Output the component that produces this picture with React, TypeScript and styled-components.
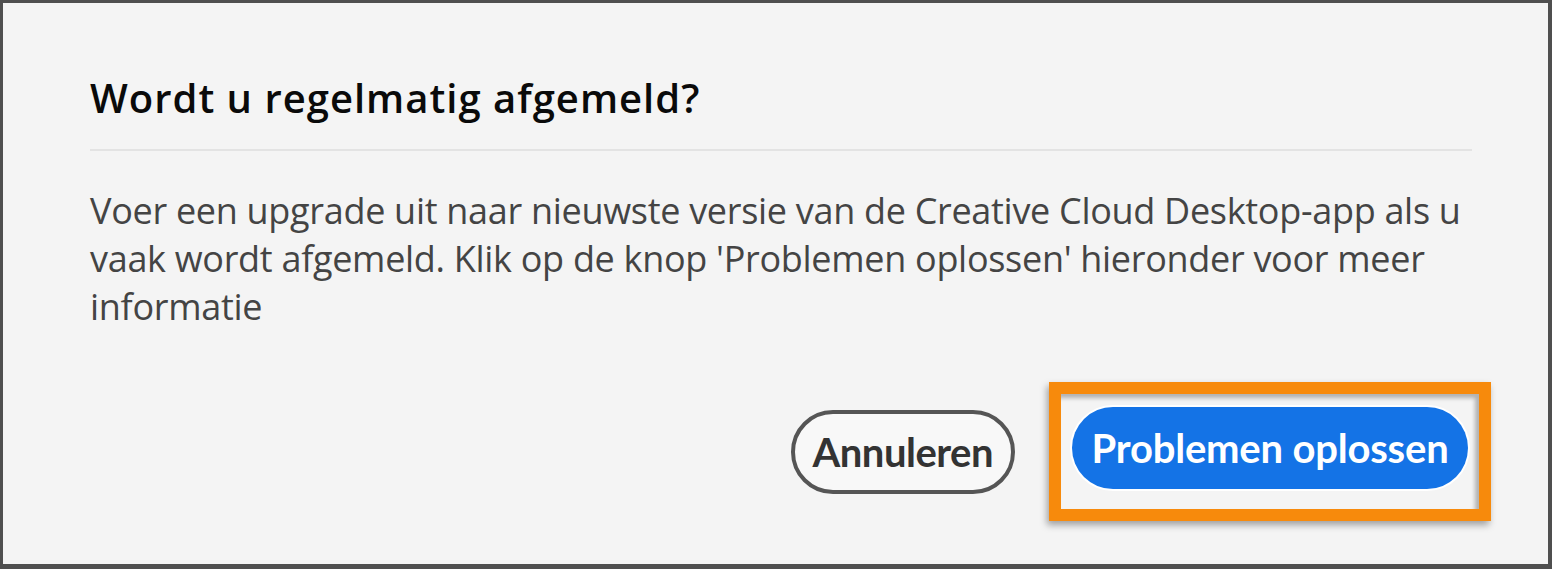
import React from "react";
import styled, { createGlobalStyle } from "styled-components";

const GlobalStyle = createGlobalStyle`
  html, body {
    margin: 0;
    padding: 0;
    background: #f4f4f4;
  }
`;

const Frame = styled.div`
  box-sizing: border-box;
  width: 1552px;
  height: 569px;
  background: #f4f4f4;
  border-style: solid;
  border-color: #4f4f4f;
  border-width: 3px 4px 5px 3px;
  display: flex;
  flex-direction: column;
  font-family: "Open Sans", "Noto Sans", sans-serif;
`;

const Content = styled.div`
  padding: 71px 76px 0 87px;
`;

const Title = styled.h2`
  margin: 0;
  font-size: 40px;
  line-height: 48px;
  font-weight: 600;
  letter-spacing: 1px;
  color: #0a0a0a;
`;

const Divider = styled.hr`
  margin: 27px 0 0;
  border: none;
  height: 2px;
  background: #e3e3e3;
`;

const Body = styled.p`
  margin: 36px 0 0;
  font-size: 36px;
  line-height: 48px;
  color: #444;
  letter-spacing: -0.3px;
`;

const Footer = styled.div`
  display: flex;
  justify-content: flex-end;
  align-items: center;
  gap: 34px;
  margin-top: 51px;
  padding-right: 57px;
`;

const GhostButton = styled.button`
  box-sizing: border-box;
  height: 84px;
  padding: 0 18px;
  border: 4px solid #555;
  border-radius: 42px;
  background: #f8f8f8;
  color: #333;
  font-family: "Lato", "Open Sans", sans-serif;
  font-size: 40px;
  font-weight: 700;
  letter-spacing: -0.5px;
`;

const Highlight = styled.div`
  box-sizing: border-box;
  border: 12px solid #f78a0c;
  padding: 13px 11px 20px 11px;
  background: #f4f4f4;
  box-shadow: -2px 4px 7px rgba(0, 0, 0, 0.35),
    inset -4px 4px 4px rgba(0, 0, 0, 0.28);
`;

const PrimaryButton = styled.button`
  box-sizing: border-box;
  width: 396px;
  height: 82px;
  border: none;
  border-radius: 41px;
  background: #1473e6;
  color: #fff;
  font-family: "Lato", "Open Sans", sans-serif;
  font-size: 40px;
  font-weight: 700;
  letter-spacing: -0.2px;
  box-shadow: 0 0 0 2px #fff;
`;

export default function App() {
  return (
    <>
      <GlobalStyle />
      <Frame>
        <Content>
          <Title>Wordt u regelmatig afgemeld?</Title>
          <Divider />
          <Body>
            Voer een upgrade uit naar nieuwste versie van de Creative Cloud
            Desktop-app als u vaak wordt afgemeld. Klik op de knop 'Problemen
            oplossen' hieronder voor meer informatie
          </Body>
        </Content>
        <Footer>
          <GhostButton>Annuleren</GhostButton>
          <Highlight>
            <PrimaryButton>Problemen oplossen</PrimaryButton>
          </Highlight>
        </Footer>
      </Frame>
    </>
  );
}
